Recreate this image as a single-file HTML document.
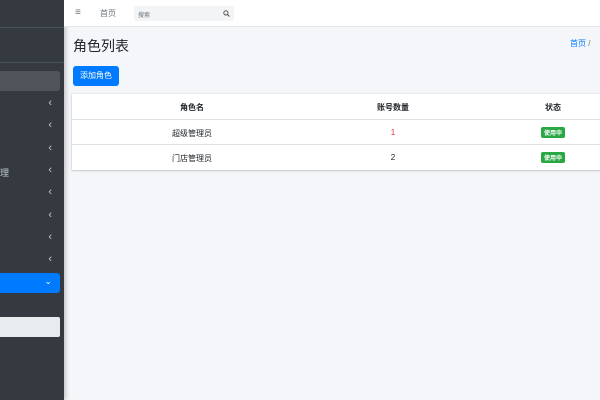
<!DOCTYPE html>
<html><head><meta charset="utf-8"><style>
*{margin:0;padding:0;box-sizing:border-box}
body{width:600px;height:400px;overflow:hidden;background:#f4f6f9;font-family:"Liberation Sans","Noto Sans CJK SC",sans-serif;position:relative}
.sb{position:absolute;left:0;top:0;width:64px;height:400px;background:#343a40;box-shadow:2px 0 4px rgba(0,0,0,.2)}
.ln{position:absolute;left:0;width:64px;height:1px;background:#4b545c}
.it{position:absolute;left:0;width:60px;height:20px;color:#c2c7d0;font-size:9px}
.ch{position:absolute;right:8px;top:4px;font-size:11px;line-height:11px;color:#c2c7d0}
.hd{position:absolute;left:64px;top:0;width:536px;height:27px;background:#fff;border-bottom:1px solid #e5e7ea}
.td{position:absolute;font-size:8px;color:#212529;text-align:center;width:160px}
.bd{display:inline-block;background:#28a745;color:#fff;font-size:6px;padding:1px 3px;border-radius:2px;font-weight:bold}
</style></head><body>
<div class="sb">
<div class="ln" style="top:27px"></div>
<div class="ln" style="top:62px"></div>
<div class="it" style="top:71px;background:#4f555b;border-radius:0 3px 3px 0"></div>
<div class="it" style="top:94px"><span class="ch">‹</span></div>
<div class="it" style="top:116px"><span class="ch">‹</span></div>
<div class="it" style="top:139px"><span class="ch">‹</span></div>
<div class="it" style="top:161px"><span style="position:absolute;left:0;top:5px">理</span><span class="ch">‹</span></div>
<div class="it" style="top:183px"><span class="ch">‹</span></div>
<div class="it" style="top:206px"><span class="ch">‹</span></div>
<div class="it" style="top:228px"><span class="ch">‹</span></div>
<div class="it" style="top:250px"><span class="ch">‹</span></div>
<div class="it" style="top:273px;background:#007bff;border-radius:0 3px 3px 0"><span class="ch" style="color:#fff;top:3px;font-size:9px">⌄</span></div>
<div class="it" style="top:317px;background:#e9ecef;border-radius:0 2px 2px 0"></div>
</div>
<div class="hd">
<div style="position:absolute;left:11px;top:7px;font-size:10px;color:#6c757d">≡</div>
<div style="position:absolute;left:36px;top:8px;font-size:8px;color:#6c757d">首页</div>
<div style="position:absolute;left:70px;top:6px;width:100px;height:15px;background:#f2f4f6;border-radius:2px;font-size:6px;color:#6c757d;padding:4px 4px">搜索<svg style="position:absolute;right:4px;top:4px" width="7" height="7" viewBox="0 0 8 8"><circle cx="3.3" cy="3.3" r="2.4" fill="none" stroke="#555" stroke-width="1.1"/><line x1="5.1" y1="5.1" x2="7.4" y2="7.4" stroke="#555" stroke-width="1.2"/></svg></div>
</div>
<div style="position:absolute;left:73px;top:36px;font-size:14px;color:#212529">角色列表</div>
<div style="position:absolute;left:570px;top:38px;font-size:8px;color:#007bff">首页 <span style="color:#6c757d">/</span></div>
<div style="position:absolute;left:73px;top:66px;width:46px;height:20px;background:#007bff;border-radius:3px;color:#fff;font-size:8px;line-height:20px;text-align:center">添加角色</div>
<div style="position:absolute;left:72px;top:94px;width:540px;height:76px;background:#fff;box-shadow:0 0 1px rgba(0,0,0,.2),0 1px 2px rgba(0,0,0,.15)">
<div style="position:absolute;left:0;top:25px;width:100%;height:1px;background:#dee2e6"></div>
<div style="position:absolute;left:0;top:50px;width:100%;height:1px;background:#dee2e6"></div>
</div>
<div class="td" style="left:112px;top:102px;font-weight:bold">角色名</div>
<div class="td" style="left:313px;top:102px;font-weight:bold">账号数量</div>
<div class="td" style="left:473px;top:102px;font-weight:bold">状态</div>
<div class="td" style="left:112px;top:128px">超级管理员</div>
<div class="td" style="left:313px;top:128px;color:#dc3545">1</div>
<div class="td" style="left:473px;top:127px"><span class="bd">使用中</span></div>
<div class="td" style="left:112px;top:153px">门店管理员</div>
<div class="td" style="left:313px;top:153px">2</div>
<div class="td" style="left:473px;top:152px"><span class="bd">使用中</span></div>
</body></html>
